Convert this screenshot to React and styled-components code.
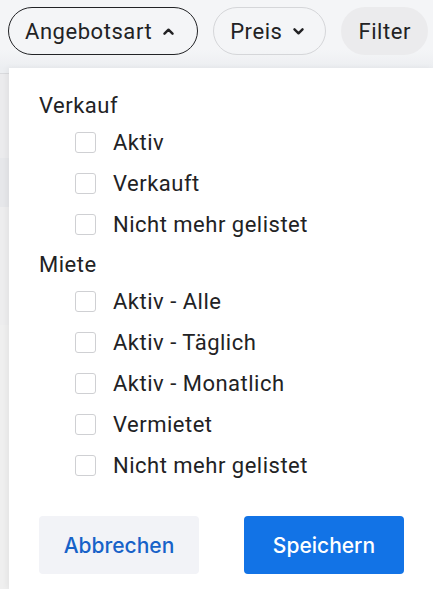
import React from "react";
import styled, { createGlobalStyle } from "styled-components";

const Global = createGlobalStyle`
  html, body { margin: 0; padding: 0; }
  body {
    width: 433px;
    height: 589px;
    overflow: hidden;
    background: #ffffff;
    font-family: Roboto, "Liberation Sans", Arial, sans-serif;
    color: #1f1f21;
  }
  * { box-sizing: border-box; }
`;

const Page = styled.div`
  display: flex;
  flex-direction: column;
  width: 433px;
  height: 589px;
  overflow: hidden;
`;

const Toolbar = styled.div`
  flex: 0 0 68px;
  display: flex;
  align-items: flex-start;
  gap: 15px;
  padding: 7px 0 0 8px;
  background: linear-gradient(to bottom, #f4f5f7 0px, #f4f5f7 50px, #eceef1 68px);
`;

const Pill = styled.button`
  display: flex;
  align-items: center;
  height: 48px;
  padding: 0 ${(p) => p.$pr}px 0 16px;
  gap: 11px;
  border-radius: 24px;
  border: 1px solid ${(p) => p.$border};
  background: ${(p) => p.$bg};
  font-family: Roboto, "Liberation Sans", Arial, sans-serif;
  font-size: 22px;
  font-weight: 400;
  letter-spacing: 0.55px;
  color: #222224;
  cursor: pointer;
`;

const Body = styled.div`
  flex: 1;
  display: flex;
  min-height: 0;
`;

const Backdrop = styled.div`
  flex: 0 0 9px;
  display: flex;
  flex-direction: column;
  background: linear-gradient(to right, #ebebeb, #efefef);
`;

const Band = styled.div`
  flex: 0 0 ${(p) => p.$h}px;
  background: ${(p) => p.$bg};
  border-top: ${(p) => (p.$line ? "1px solid #d9dadd" : "none")};
`;

const Panel = styled.div`
  flex: 1;
  display: flex;
  flex-direction: column;
  background: #ffffff;
  padding: 22px 29px 0 30px;
  box-shadow: -2px 0 6px rgba(0, 0, 0, 0.05);
`;

const Group = styled.div`
  display: flex;
  flex-direction: column;
  margin-top: ${(p) => (p.$first ? 0 : 4)}px;
`;

const GroupTitle = styled.div`
  height: 32px;
  line-height: 32px;
  font-size: 22px;
  letter-spacing: 0.5px;
  color: #222224;
`;

const Row = styled.label`
  display: flex;
  align-items: center;
  height: 41px;
  padding-left: 36px;
  gap: 17px;
  cursor: pointer;
`;

const Box = styled.span`
  flex: 0 0 21px;
  width: 21px;
  height: 21px;
  border: 1px solid #cfd0d3;
  border-radius: 3px;
  background: #fff;
`;

const Label = styled.span`
  font-size: 22px;
  letter-spacing: 0.5px;
  color: #222224;
  white-space: nowrap;
`;

const Actions = styled.div`
  display: flex;
  justify-content: space-between;
  margin-top: 30px;
`;

const ActionButton = styled.button`
  width: 160px;
  height: 58px;
  border: none;
  border-radius: 4px;
  background: ${(p) => (p.$primary ? "#1273e6" : "#f2f3f7")};
  color: ${(p) => (p.$primary ? "#ffffff" : "#1762c8")};
  font-family: Inter, Roboto, "Liberation Sans", Arial, sans-serif;
  font-size: 21px;
  font-weight: 500;
  cursor: pointer;
`;

const Chevron = ({ up }) => (
  <svg width="11" height="7" viewBox="0 0 11 7" aria-hidden="true">
    <path
      d={up ? "M1.5 5.7 L5.5 1.7 L9.5 5.7" : "M1.5 1.3 L5.5 5.3 L9.5 1.3"}
      fill="none"
      stroke="#222224"
      strokeWidth="2.4"
      strokeLinecap="round"
      strokeLinejoin="round"
    />
  </svg>
);

const groups = [
  { title: "Verkauf", items: ["Aktiv", "Verkauft", "Nicht mehr gelistet"] },
  {
    title: "Miete",
    items: ["Aktiv - Alle", "Aktiv - Täglich", "Aktiv - Monatlich", "Vermietet", "Nicht mehr gelistet"],
  },
];

export default function App() {
  return (
    <Page>
      <Global />
      <Toolbar>
        <Pill $pr={23} $border="#222326" $bg="transparent">
          Angebotsart <Chevron up />
        </Pill>
        <Pill $pr={21} $border="#d5d6d9" $bg="transparent">
          Preis <Chevron />
        </Pill>
        <Pill $pr={16} $border="transparent" $bg="#ebebed">
          Filter
        </Pill>
      </Toolbar>
      <Body>
        <Backdrop>
          <Band $h={5} $bg="#eceef1" />
          <Band $h={85} $bg="#ebebed" $line />
          <Band $h={49} $bg="#e6e7ea" />
          <Band $h={118} $bg="#ededee" />
          <Band $h={300} $bg="#efefef" />
        </Backdrop>
        <Panel>
          {groups.map((g, gi) => (
            <Group key={g.title} $first={gi === 0}>
              <GroupTitle>{g.title}</GroupTitle>
              {g.items.map((it) => (
                <Row key={it}>
                  <Box />
                  <Label>{it}</Label>
                </Row>
              ))}
            </Group>
          ))}
          <Actions>
            <ActionButton>Abbrechen</ActionButton>
            <ActionButton $primary>Speichern</ActionButton>
          </Actions>
        </Panel>
      </Body>
    </Page>
  );
}
